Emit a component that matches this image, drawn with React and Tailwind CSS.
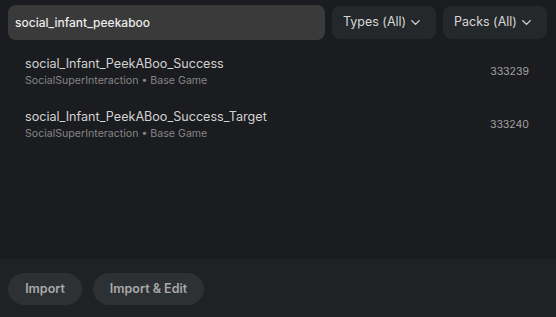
import { ChevronDown } from 'lucide-react';

const App = () => {
    const results = [
        { name: "social_Infant_PeekABoo_Success", type: "SocialSuperInteraction", pack: "Base Game", id: "333239" },
        { name: "social_Infant_PeekABoo_Success_Target", type: "SocialSuperInteraction", pack: "Base Game", id: "333240" },
    ];

    return (
        <div className="w-[556px] h-[317px] bg-[#1b1c1f] flex flex-col font-['Inter',sans-serif] overflow-hidden">
            {/* Search bar + filters */}
            <div className="flex items-center gap-[7px] pl-2 pr-[9px] pt-[5px]">
                <div className="flex-1 h-[35px] rounded-lg bg-[#3a3a3a] flex items-center px-[7px]">
                    <span className="text-[12px] font-medium text-[#ececec]">social_infant_peekaboo</span>
                </div>
                <button className="h-[33px] w-[104px] rounded-lg bg-[#25282b] flex items-center justify-between pl-[11px] pr-[13px] text-[12.5px] text-[#d6d6d6]">
                    <span>Types (All)</span>
                    <ChevronDown size={15} strokeWidth={2.2} />
                </button>
                <button className="h-[33px] w-[104px] rounded-lg bg-[#25282b] flex items-center justify-between pl-[11px] pr-[13px] text-[12.5px] text-[#d6d6d6]">
                    <span>Packs (All)</span>
                    <ChevronDown size={15} strokeWidth={2.2} />
                </button>
            </div>

            {/* Results */}
            <div className="flex-1 pt-[8px]">
                {results.map((r) => (
                    <div key={r.id} className="flex items-center justify-between pl-[25px] pr-[27px] h-[53px]">
                        <div className="flex flex-col gap-[2px] -mt-[6px]">
                            <div className="text-[12.6px] text-[#d2d2d2] leading-[16px]">{r.name}</div>
                            <div className="text-[10.6px] text-[#858585] leading-[14px]">{r.type} • {r.pack}</div>
                        </div>
                        <div className="text-[10.5px] text-[#a3a3a3] -mt-[6px]">{r.id}</div>
                    </div>
                ))}
            </div>

            {/* Footer */}
            <div className="h-[58px] bg-[#202124] flex items-start gap-[11px] px-2 pt-[14px]">
                <button className="h-[32px] w-[74px] rounded-full bg-[#2e3134] text-[12.5px] font-semibold text-[#a9a9a9]">Import</button>
                <button className="h-[32px] w-[111px] rounded-full bg-[#2e3134] text-[12.5px] font-semibold text-[#a9a9a9]">Import &amp; Edit</button>
            </div>
        </div>
    );
};

export default App;
